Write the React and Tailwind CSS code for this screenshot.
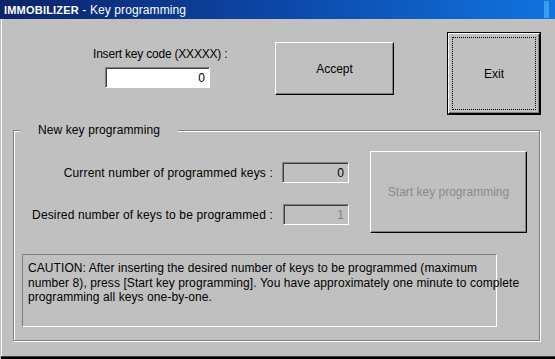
export default function App() {
  const font = { fontFamily: '"Liberation Sans", Arial, sans-serif' }
  const sunken =
    'border border-t-[#808080] border-l-[#808080] border-b-white border-r-white shadow-[inset_1px_1px_0_#404040]'
  const raised =
    'border border-t-white border-l-white border-b-black border-r-black shadow-[inset_-1px_-1px_0_#808080]'

  return (
    <div
      className="w-[555px] h-[359px] bg-[#c0c0c0] flex flex-col text-[12px] leading-[14px] text-black overflow-hidden"
      style={font}
    >
      {/* title bar */}
      <div className="h-[19px] flex items-center bg-gradient-to-r from-[#0a246a] via-[#0c47a8] to-[#1274e0] text-white pl-[4px]">
        <span className="font-bold text-[11px] tracking-[0.2px]">IMMOBILIZER</span>
        <span className="whitespace-pre tracking-[0.1px]"> - Key programming</span>
        <div className="ml-auto mr-[6px] w-[5px] h-[17px] bg-[#38a0e6]" />
      </div>

      <div className="flex-1 flex flex-col pl-px">
        <div className="flex-1 flex flex-col border-l border-white">
          {/* top row */}
          <div className="flex items-start">
            <div className="w-[273px] flex flex-col">
              <div className="ml-[91px] mt-[28px] whitespace-nowrap tracking-[-0.2px]">Insert key code (XXXXX) :</div>
              <div
                className={`ml-[103px] mt-[6px] w-[105px] h-[21px] bg-white ${sunken} flex items-center justify-end pr-[4px]`}
              >
                0
              </div>
            </div>
            <button
              className={`mt-[23px] w-[119px] h-[53px] bg-[#c0c0c0] ${raised} flex items-center justify-center`}
            >
              Accept
            </button>
            <div className="ml-[53px] mt-[13px] w-[94px] h-[83px] border border-black">
              <div className={`w-full h-full ${raised} p-[3px]`}>
                <div className="w-full h-full border border-dotted border-black flex items-center justify-center">
                  Exit
                </div>
              </div>
            </div>
          </div>

          {/* group box */}
          <div className="relative ml-[11px] mt-[15px] w-[527px] h-[211px] border border-[#808080] shadow-[inset_1px_1px_0_#fff,1px_1px_0_#fff]">
            <span className="absolute left-[6px] top-[-8px] px-[18px] bg-[#c0c0c0] whitespace-nowrap tracking-[0.1px]">
              New key programming
            </span>

            <div className="flex items-start pt-[20px]">
              <div className="w-[335px] flex flex-col">
                <div className="mt-[11px] flex items-center justify-end gap-[9px]">
                  <span className="whitespace-nowrap tracking-[0.17px]">Current number of programmed keys :</span>
                  <div className={`w-[67px] h-[21px] ${sunken} flex items-center justify-end pr-[4px]`}>0</div>
                </div>
                <div className="mt-[21px] flex items-center justify-end gap-[10px]">
                  <span className="whitespace-nowrap tracking-[0.15px]">Desired number of keys to be programmed :</span>
                  <div
                    className={`w-[66px] h-[21px] ${sunken} flex items-center justify-end pr-[4px] text-[#808080]`}
                  >
                    1
                  </div>
                </div>
              </div>
              <button
                disabled
                className={`ml-[21px] w-[157px] h-[82px] bg-[#c0c0c0] ${raised} flex items-center justify-center text-[#8a8a8a]`}
              >
                Start key programming
              </button>
            </div>

            <div
              className="ml-[8px] mt-[21px] w-[475px] h-[73px] border border-t-[#808080] border-l-[#808080] border-b-white border-r-white pl-[5px] pt-[6px] leading-[14.5px] whitespace-nowrap tracking-[0.08px]"
            >
              CAUTION: After inserting the desired number of keys to be programmed (maximum
              <br />
              number 8), press [Start key programming]. You have approximately one minute to complete
              <br />
              programming all keys one-by-one.
            </div>
          </div>
        </div>
        <div className="h-px bg-[#404040]" />
        <div className="h-[2px] bg-black" />
      </div>
    </div>
  )
}
